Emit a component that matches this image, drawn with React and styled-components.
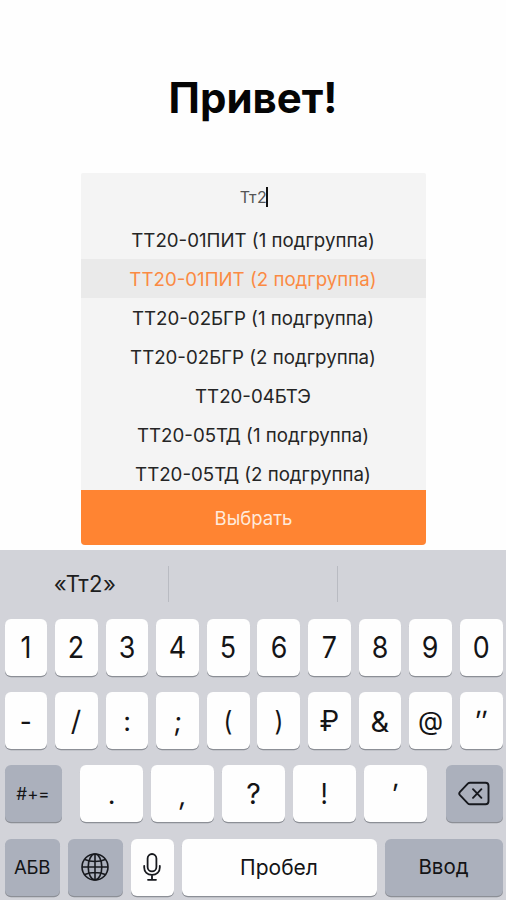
import React from 'react';
import styled, { createGlobalStyle } from 'styled-components';

const GlobalStyle = createGlobalStyle`
  * { box-sizing: border-box; }
  body { margin: 0; background: #fefefe; font-family: Inter, "Liberation Sans", sans-serif; }
`;

const Screen = styled.main`
  width: 506px;
  height: 900px;
  display: flex;
  flex-direction: column;
  align-items: center;
  overflow: hidden;
  background: #fefefe;
  color: #111;
`;

const Title = styled.h1`
  margin: 73px 0 0;
  height: 50px;
  line-height: 50px;
  font-size: 42px;
  font-weight: 700;
  color: #050505;
`;

const Picker = styled.section`
  width: 345px;
  height: 372px;
  margin-top: 50px;
  display: flex;
  flex-direction: column;
  border-radius: 2px 2px 4px 4px;
  overflow: hidden;
  background: #f4f4f4;
`;

const Search = styled.div`
  height: 47px;
  flex: none;
  display: flex;
  align-items: center;
  justify-content: center;
  padding-left: 2px;
  font-size: 16px;
  letter-spacing: 0.5px;
  color: #555;
`;

const Caret = styled.span`
  width: 2px;
  height: 20px;
  margin-left: -1px;
  background: #111;
`;

const Options = styled.ul`
  flex: 1;
  min-height: 0;
  margin: 0;
  padding: 0;
  list-style: none;
  overflow: hidden;
`;

const Option = styled.li`
  height: 39px;
  line-height: 41px;
  text-align: center;
  white-space: nowrap;
  font-size: 18.7px;
  color: ${(p) => (p.$selected ? '#fb8a43' : '#252525')};
  background: ${(p) => (p.$selected ? '#eaeaea' : 'transparent')};
`;

const Submit = styled.button`
  height: 55px;
  flex: none;
  border: 0;
  padding: 0 0 0 1px;
  background: #ff8432;
  color: #ffeadb;
  font: 400 18.5px Inter, sans-serif;
`;

const Keyboard = styled.section`
  width: 506px;
  height: 350px;
  margin-top: 5px;
  padding: 0 3.5px 0 4.5px;
  background: #d2d3d9;
`;

const Suggestions = styled.div`
  height: 69px;
  padding-top: 16px;
  margin: 0 -3.5px 0 -4.5px;
  display: grid;
  grid-template-columns: 168px 169px 1fr;
`;

const Suggestion = styled.div`
  height: 36px;
  line-height: 36px;
  padding-left: 2px;
  text-align: center;
  font-size: 22.2px;
  letter-spacing: 0.4px;
  color: #1d1d20;
  border-left: ${(p) => (p.$divided ? '1px solid #b9bbc2' : '0')};
`;

const KeyRow = styled.div`
  display: grid;
  grid-template-columns: ${(p) => p.$columns};
  column-gap: ${(p) => p.$gap || 7.8}px;
  height: 57px;
  margin-bottom: 16.2px;
`;

const Key = styled.div`
  display: flex;
  align-items: center;
  justify-content: center;
  min-width: 0;
  padding-top: ${(p) => p.$drop || 0}px;
  border-radius: 6px;
  background: ${(p) => (p.$muted ? '#abb0bc' : '#fefefe')};
  box-shadow: 0 1.3px 0.5px #8c8f96;
  font-size: ${(p) => p.$size || 29.5}px;
  letter-spacing: ${(p) => p.$tracking || 0}px;
  line-height: 1;
  color: #141416;
`;

const Glyph = styled.span`
  display: block;
  transform: ${(p) =>
    `translateY(${p.$shift || 0}px) skewX(${p.$slant || 0}deg) scaleX(${p.$narrow || 1})`};
`;

const GROUPS = [
  'ТТ20-01ПИТ (1 подгруппа)',
  'ТТ20-01ПИТ (2 подгруппа)',
  'ТТ20-02БГР (1 подгруппа)',
  'ТТ20-02БГР (2 подгруппа)',
  'ТТ20-04БТЭ',
  'ТТ20-05ТД (1 подгруппа)',
  'ТТ20-05ТД (2 подгруппа)',
];

const Globe = () => (
  <svg width="30" height="30" viewBox="0 0 30 30" fill="none" stroke="#17191e" strokeWidth="1.6">
    <circle cx="15" cy="15" r="13" />
    <ellipse cx="15" cy="15" rx="6.8" ry="13" />
    <path d="M15 2v26M2 15h26M4.8 7.6c5.6 2.6 14.8 2.6 20.4 0M4.8 22.4c5.6-2.6 14.8-2.6 20.4 0" />
  </svg>
);

const Mic = () => (
  <svg width="20" height="30" viewBox="0 0 20 30" fill="none" stroke="#17191e" strokeWidth="1.8" strokeLinecap="round">
    <rect x="5.6" y="2" width="8.8" height="17.4" rx="4.4" />
    <path d="M2.2 13.8v1.8c0 4.5 3.2 7.3 7.8 7.3s7.8-2.8 7.8-7.3v-1.8M10 23v4.6M6 27.8h8" />
  </svg>
);

const Backspace = () => (
  <svg width="32" height="25" viewBox="0 0 32 25" fill="none" stroke="#17191e" strokeWidth="1.9" strokeLinecap="round" strokeLinejoin="round">
    <path d="M12 1.8h15.5c1.8 0 3 1.2 3 3v15.4c0 1.8-1.2 3-3 3H12c-.9 0-1.6-.3-2.2-.9L2 14.2c-1-1.1-1-2.3 0-3.4l7.8-8.1c.6-.6 1.3-.9 2.2-.9z" />
    <path d="M15 8.2l8.4 8.6M23.4 8.2L15 16.8" />
  </svg>
);

const SYMBOLS = [
  { s: '-', size: 29, narrow: 0.9 },
  { s: '/', size: 28, slant: -1 },
  { s: ':', size: 27 },
  { s: ';', size: 27, slant: -3 },
  { s: '(', size: 27, narrow: 0.9 },
  { s: ')', size: 27, narrow: 0.9 },
  { s: '₽', size: 28 },
  { s: '&', size: 29 },
  { s: '@', size: 26 },
  { s: '″', size: 28, slant: -4 },
];
const MARKS = [
  { s: '.', size: 27 },
  { s: ',', size: 27, slant: -5, shift: 1 },
  { s: '?', size: 28.5 },
  { s: '!', size: 28.5, narrow: 0.9 },
  { s: '′', size: 28, slant: -4 },
];

const SymbolKey = ({ s, size, slant, shift, narrow }) => (
  <Key $size={size} $drop={1}>
    <Glyph $shift={shift} $slant={slant} $narrow={narrow}>{s}</Glyph>
  </Key>
);

export default function App() {
  return (
    <>
      <GlobalStyle />
      <Screen>
        <Title>Привет!</Title>
        <Picker>
          <Search>Тт2<Caret /></Search>
          <Options>
            {GROUPS.map((g, i) => (
              <Option key={g} $selected={i === 1}>{g}</Option>
            ))}
          </Options>
          <Submit>Выбрать</Submit>
        </Picker>
        <Keyboard>
          <Suggestions>
            <Suggestion>«Тт2»</Suggestion>
            <Suggestion $divided />
            <Suggestion $divided />
          </Suggestions>
          <KeyRow $columns="repeat(10, 1fr)">
            {[...'1234567890'].map((d) => <SymbolKey key={d} s={d} size={29.5} narrow={0.91} />)}
          </KeyRow>
          <KeyRow $columns="repeat(10, 1fr)">
            {SYMBOLS.map((k) => <SymbolKey key={k.s} {...k} />)}
          </KeyRow>
          <KeyRow $columns="57px 3px repeat(5, 1fr) 3px 57px">
            <Key $muted $size={17} $drop={1}>#+=</Key>
            <span />
            {MARKS.map((k) => <SymbolKey key={k.s} {...k} />)}
            <span />
            <Key $muted><Backspace /></Key>
          </KeyRow>
          <KeyRow $columns="55px 55px 43px 1fr 118px" $gap={8}>
            <Key $muted $size={18.6} $tracking={-0.3}>АБВ</Key>
            <Key $muted><Globe /></Key>
            <Key><Mic /></Key>
            <Key $size={21}>Пробел</Key>
            <Key $muted $size={20.5}>Ввод</Key>
          </KeyRow>
        </Keyboard>
      </Screen>
    </>
  );
}
